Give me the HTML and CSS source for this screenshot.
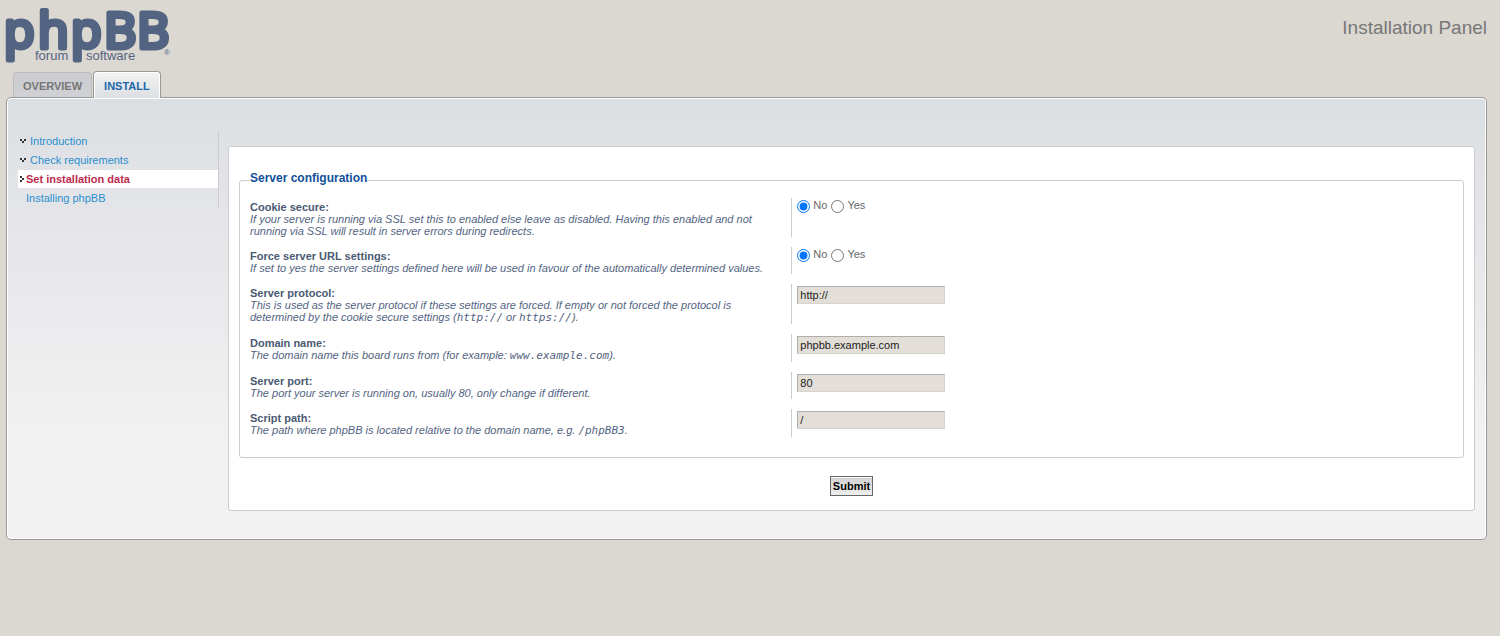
FILE: index.html
```html
<!DOCTYPE html>
<html lang="en">
<head>
<meta charset="utf-8">
<meta name="viewport" content="width=device-width, initial-scale=1">
<title>Installation Panel</title>
<link rel="stylesheet" href="styles.css">
</head>
<body>
<header class="page-header">
  <svg class="logo" width="166" height="57" viewBox="5 6 166 57" role="img" aria-label="phpBB forum software">
    <text class="logo-word" y="48" x="4 38 71 104 137">phpBB</text>
    <text class="logo-small" x="35" y="60">forum</text>
    <text class="logo-small" x="86" y="60">software</text>
    <text class="logo-mark" x="164" y="55">®</text>
  </svg>
  <h1 class="page-title">Installation Panel</h1>
</header>

<nav class="tabs">
  <a class="tab" href="#overview">OVERVIEW</a>
  <a class="tab tab-active" href="#install">INSTALL</a>
</nav>

<div class="panel">
  <nav class="menu">
    <a class="menu-item done" href="#introduction"><svg class="mark" width="6" height="4" viewBox="0 0 6 4" aria-hidden="true"><path d="M0 0h2v2h-2zM4 0h2v2h-2zM2 2h2v2h-2z"/></svg>Introduction</a>
    <a class="menu-item done" href="#requirements"><svg class="mark" width="6" height="4" viewBox="0 0 6 4" aria-hidden="true"><path d="M0 0h2v2h-2zM4 0h2v2h-2zM2 2h2v2h-2z"/></svg>Check requirements</a>
    <a class="menu-item current" href="#data"><svg class="mark" width="4" height="6" viewBox="0 0 4 6" aria-hidden="true"><path d="M0 0h2v2h-2zM2 2h2v2h-2zM0 4h2v2h-2z"/></svg>Set installation data</a>
    <a class="menu-item" href="#installing">Installing phpBB</a>
  </nav>

  <main class="main">
    <form>
      <fieldset class="settings">
        <legend>Server configuration</legend>
        <div class="row" role="radiogroup" aria-labelledby="cookie-label">
          <div class="term"><span class="label" id="cookie-label">Cookie secure:</span><span class="hint">If your server is running via SSL set this to enabled else leave as disabled. Having this enabled and not running via SSL will result in server errors during redirects.</span></div>
          <div class="field"><label><input type="radio" name="cookie_secure" checked>No</label><label><input type="radio" name="cookie_secure">Yes</label></div>
        </div>
        <div class="row" role="radiogroup" aria-labelledby="force-label">
          <div class="term"><span class="label" id="force-label">Force server URL settings:</span><span class="hint">If set to yes the server settings defined here will be used in favour of the automatically determined values.</span></div>
          <div class="field"><label><input type="radio" name="force_url" checked>No</label><label><input type="radio" name="force_url">Yes</label></div>
        </div>
        <div class="row">
          <div class="term"><label class="label" for="protocol">Server protocol:</label><span class="hint">This is used as the server protocol if these settings are forced. If empty or not forced the protocol is determined by the cookie secure settings (<samp>http://</samp> or <samp>https://</samp>).</span></div>
          <div class="field"><input class="text" type="text" id="protocol" value="http://"></div>
        </div>
        <div class="row">
          <div class="term"><label class="label" for="domain">Domain name:</label><span class="hint">The domain name this board runs from (for example: <samp>www.example.com</samp>).</span></div>
          <div class="field"><input class="text" type="text" id="domain" value="phpbb.example.com"></div>
        </div>
        <div class="row">
          <div class="term"><label class="label" for="port">Server port:</label><span class="hint">The port your server is running on, usually 80, only change if different.</span></div>
          <div class="field"><input class="text" type="text" id="port" value="80"></div>
        </div>
        <div class="row">
          <div class="term"><label class="label" for="path">Script path:</label><span class="hint">The path where phpBB is located relative to the domain name, e.g. <samp>/phpBB3</samp>.</span></div>
          <div class="field"><input class="text" type="text" id="path" value="/"></div>
        </div>
      </fieldset>
      <div class="actions"><button class="submit" type="submit">Submit</button></div>
    </form>
  </main>
</div>
</body>
</html>
```
FILE: styles.css
```css
* { box-sizing: border-box; }

body {
  margin: 0;
  padding: 6px 13px 12px 6px;
  background: #dbd7d1;
  color: #536482;
  font: 11px/12px "Liberation Sans", Arial, sans-serif;
}

a { text-decoration: none; }

.page-header {
  display: flex;
  justify-content: space-between;
  height: 65px;
}

.logo { display: block; margin-left: -1px; fill: #536482; overflow: visible; }
.logo-word {
  font: 400 50px "Open Sans", sans-serif;
  stroke: #536482;
  stroke-width: 5px;
  stroke-linejoin: round;
}
.logo-small { font: 13px "Liberation Sans", Arial, sans-serif; }
.logo-mark { font: 8px "Liberation Sans", Arial, sans-serif; }

.page-title {
  margin: 11px 0 0;
  color: #777;
  font-size: 19px;
  font-weight: 400;
  line-height: 22px;
}

.tabs {
  position: relative;
  display: flex;
  align-items: flex-end;
  gap: 1px;
  padding-left: 7px;
  margin-bottom: -1px;
  z-index: 1;
}
.tab {
  height: 25px;
  margin-bottom: 1px;
  padding: 7px 9px 0;
  border: 1px solid #bcbcbc;
  border-bottom: 0;
  border-radius: 4px 4px 0 0;
  background: linear-gradient(#cbccd1, #d0d1d5);
  color: #767676;
  font-weight: 700;
}
.tab-active {
  height: 27px;
  margin-bottom: 0;
  padding: 8px 10px 0;
  border-color: #999;
  background: linear-gradient(#f2f2f2, #dcdfe3);
  box-shadow: inset 1px 1px #fff, inset -1px 0 #fff;
  color: #1c67a8;
}

.panel {
  display: flex;
  align-items: flex-start;
  gap: 9px;
  padding: 33px 11px 28px;
  border: 1px solid #999;
  border-radius: 5px;
  background: linear-gradient(#dbdee2, #dee1e4 40px, #e2e3e7 80px, #f2f2f2 350px);
  box-shadow: inset 0 0 0 1px #fff;
}

.menu {
  flex: 0 0 201px;
  border-right: 1px solid #ccc;
  padding-bottom: 1px;
}
.menu-item {
  display: flex;
  align-items: center;
  height: 18px;
  margin-top: 1px;
  padding: 0 0 0 8px;
  color: #2a8fcf;
}
.done { padding-left: 2px; gap: 4px; }
.current {
  padding-left: 2px;
  gap: 2px;
  background: #fff;
  color: #bc2a4d;
  font-weight: 700;
}
.mark { fill: #333; shape-rendering: crispEdges; }

.main {
  flex: 1;
  min-width: 0;
  margin-top: 15px;
  padding: 24px 10px 14px;
  border: 1px solid #ccc;
  border-radius: 3px;
  background: #fff;
}

.settings {
  margin: 0;
  padding: 9px 10px 20px;
  border: 1px solid #ccc;
  border-radius: 3px;
}
.settings legend {
  padding: 0 0 4px;
  color: #115098;
  font-size: 12px;
  font-weight: 700;
  line-height: 14px;
}
.row { display: flex; }
.row + .row { margin-top: 10px; }
.term { width: 45%; padding: 3px 20px 0 0; }
.label { display: block; color: #4a5a73; font-weight: 700; }
.hint { display: block; font-style: italic; }
.hint samp { font: italic 11px/12px "DejaVu Sans Mono", monospace; }
.field {
  display: flex;
  flex: 1;
  align-items: flex-start;
  gap: 4px;
  padding: 2px 0 0 5px;
  border-left: 1px solid #ccc;
}
.field label { display: flex; gap: 3px; color: #666; line-height: 11px; }
.field input[type="radio"] { width: 13px; height: 13px; margin: 0; }
.text {
  width: 148px;
  height: 18px;
  padding: 0 2px;
  border: 1px solid #d5d3cb;
  border-top-color: #afaeaa;
  border-left-color: #afaeaa;
  border-radius: 0;
  background: #e3dfd8;
  color: #222;
  font: 11px "Liberation Sans", Arial, sans-serif;
}

.actions { padding-top: 18px; text-align: center; }
.submit {
  height: 20px;
  padding: 0 2px;
  border: 1px solid #666;
  border-radius: 0;
  background: linear-gradient(#d2d2d2, #efefef);
  box-shadow: inset 0 1px #fff;
  color: #000;
  font: 700 11px "Liberation Sans", Arial, sans-serif;
  vertical-align: top;
}
```
